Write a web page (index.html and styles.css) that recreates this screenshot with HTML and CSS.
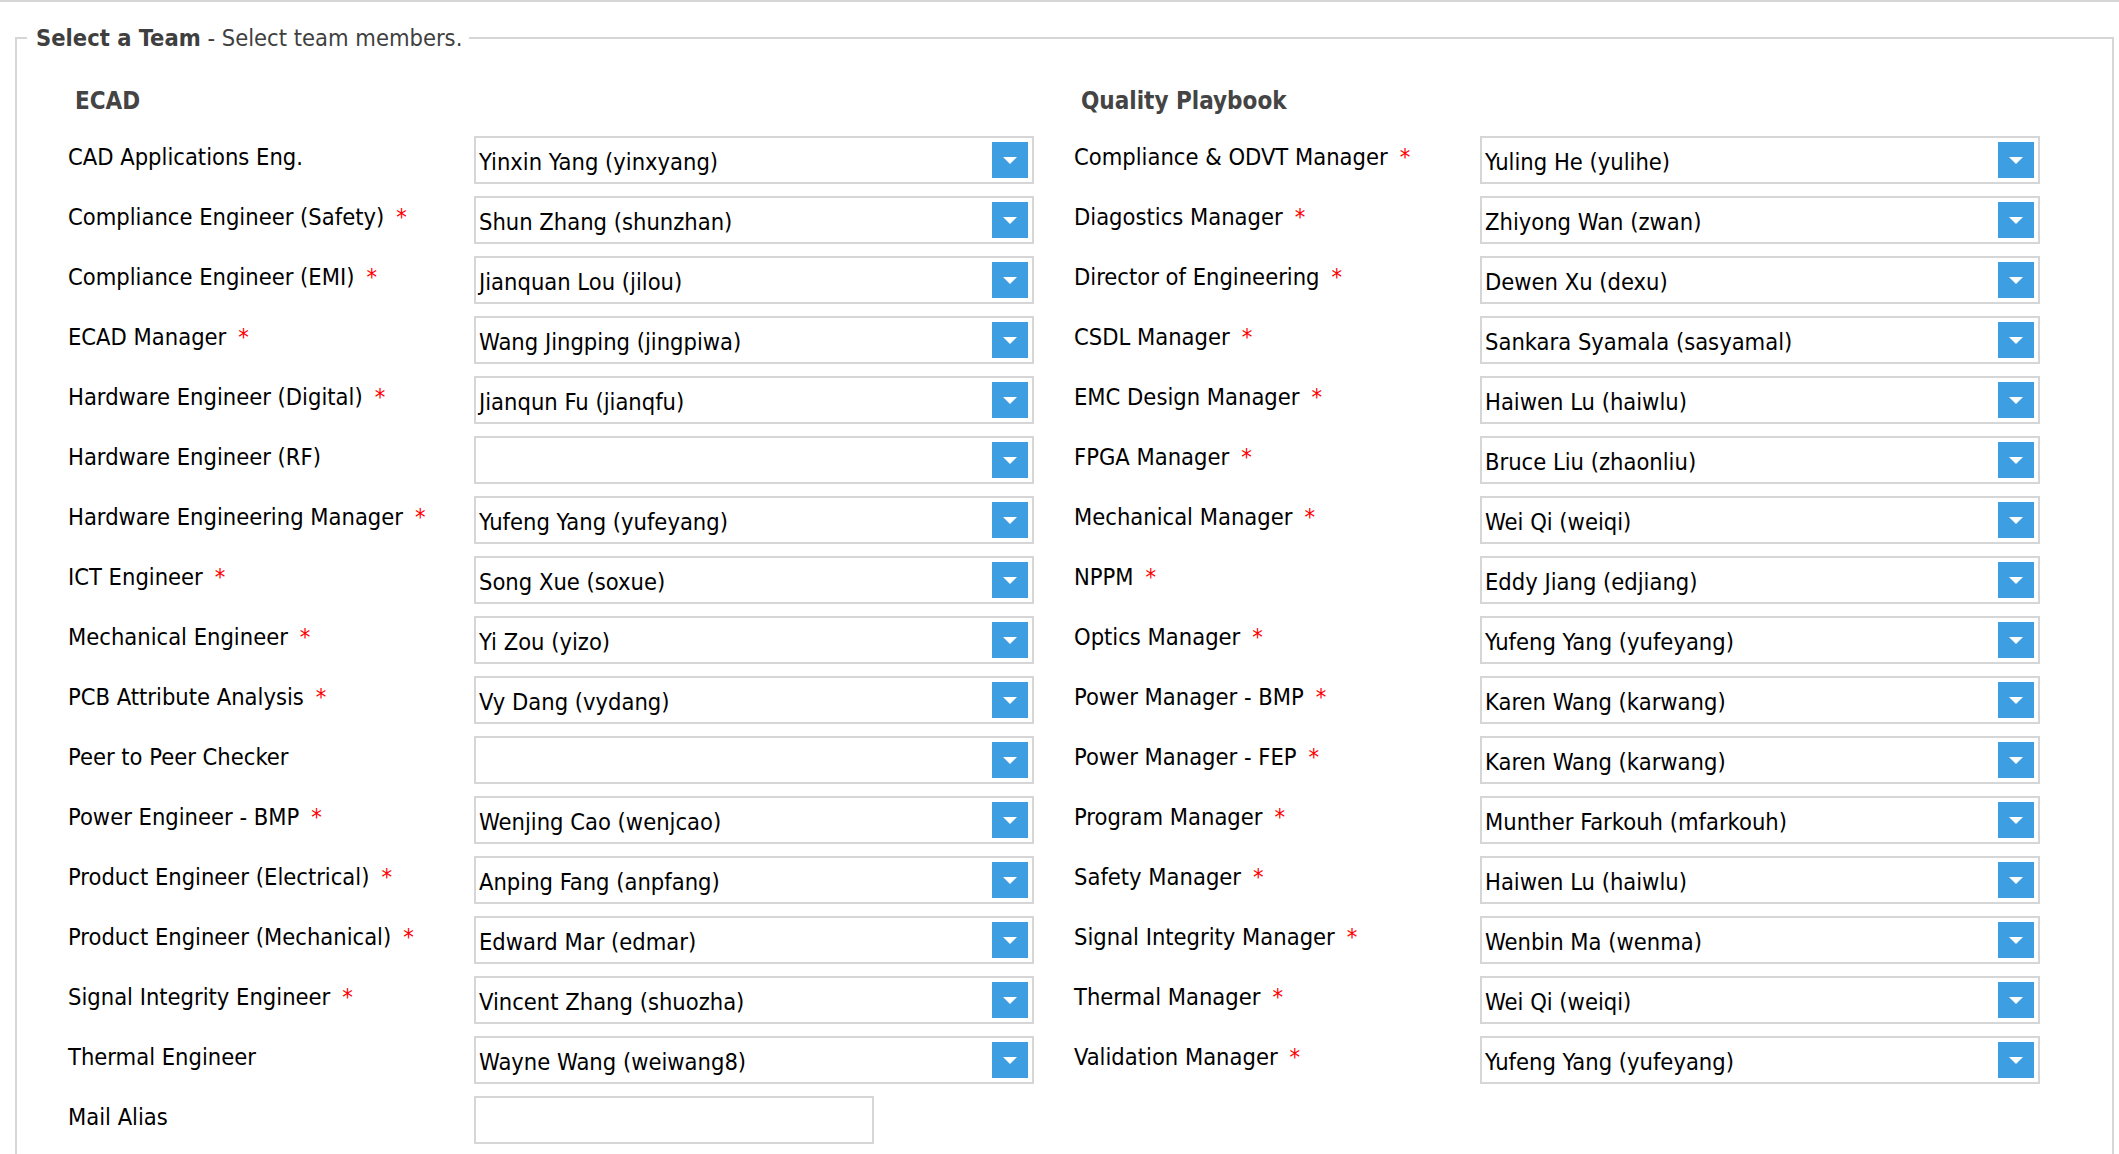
FILE: index.html
```html
<!DOCTYPE html>
<html>
<head>
<meta charset="utf-8">
<title>Select a Team</title>
<link rel="stylesheet" href="styles.css">
</head>
<body>
<div class="topline"></div>
<fieldset class="team">
  <legend class="team-legend"><strong>Select a Team</strong> - Select team members.</legend>
  <div class="sections">
    <section class="group">
      <h3 class="group-title">ECAD</h3>
      <div class="rows">
        <div class="row"><label class="lbl">CAD Applications Eng.</label><div class="combo"><span class="val">Yinxin Yang (yinxyang)</span><span class="btn"><svg width="14" height="7" viewBox="0 0 14 7"><polygon points="0,0 14,0 7,7" fill="#fff"/></svg></span></div></div>
        <div class="row"><label class="lbl">Compliance Engineer (Safety)<span class="req">*</span></label><div class="combo"><span class="val">Shun Zhang (shunzhan)</span><span class="btn"><svg width="14" height="7" viewBox="0 0 14 7"><polygon points="0,0 14,0 7,7" fill="#fff"/></svg></span></div></div>
        <div class="row"><label class="lbl">Compliance Engineer (EMI)<span class="req">*</span></label><div class="combo"><span class="val">Jianquan Lou (jilou)</span><span class="btn"><svg width="14" height="7" viewBox="0 0 14 7"><polygon points="0,0 14,0 7,7" fill="#fff"/></svg></span></div></div>
        <div class="row"><label class="lbl">ECAD Manager<span class="req">*</span></label><div class="combo"><span class="val">Wang Jingping (jingpiwa)</span><span class="btn"><svg width="14" height="7" viewBox="0 0 14 7"><polygon points="0,0 14,0 7,7" fill="#fff"/></svg></span></div></div>
        <div class="row"><label class="lbl">Hardware Engineer (Digital)<span class="req">*</span></label><div class="combo"><span class="val">Jianqun Fu (jianqfu)</span><span class="btn"><svg width="14" height="7" viewBox="0 0 14 7"><polygon points="0,0 14,0 7,7" fill="#fff"/></svg></span></div></div>
        <div class="row"><label class="lbl">Hardware Engineer (RF)</label><div class="combo"><span class="val"></span><span class="btn"><svg width="14" height="7" viewBox="0 0 14 7"><polygon points="0,0 14,0 7,7" fill="#fff"/></svg></span></div></div>
        <div class="row"><label class="lbl">Hardware Engineering Manager<span class="req">*</span></label><div class="combo"><span class="val">Yufeng Yang (yufeyang)</span><span class="btn"><svg width="14" height="7" viewBox="0 0 14 7"><polygon points="0,0 14,0 7,7" fill="#fff"/></svg></span></div></div>
        <div class="row"><label class="lbl">ICT Engineer<span class="req">*</span></label><div class="combo"><span class="val">Song Xue (soxue)</span><span class="btn"><svg width="14" height="7" viewBox="0 0 14 7"><polygon points="0,0 14,0 7,7" fill="#fff"/></svg></span></div></div>
        <div class="row"><label class="lbl">Mechanical Engineer<span class="req">*</span></label><div class="combo"><span class="val">Yi Zou (yizo)</span><span class="btn"><svg width="14" height="7" viewBox="0 0 14 7"><polygon points="0,0 14,0 7,7" fill="#fff"/></svg></span></div></div>
        <div class="row"><label class="lbl">PCB Attribute Analysis<span class="req">*</span></label><div class="combo"><span class="val">Vy Dang (vydang)</span><span class="btn"><svg width="14" height="7" viewBox="0 0 14 7"><polygon points="0,0 14,0 7,7" fill="#fff"/></svg></span></div></div>
        <div class="row"><label class="lbl">Peer to Peer Checker</label><div class="combo"><span class="val"></span><span class="btn"><svg width="14" height="7" viewBox="0 0 14 7"><polygon points="0,0 14,0 7,7" fill="#fff"/></svg></span></div></div>
        <div class="row"><label class="lbl">Power Engineer - BMP<span class="req">*</span></label><div class="combo"><span class="val">Wenjing Cao (wenjcao)</span><span class="btn"><svg width="14" height="7" viewBox="0 0 14 7"><polygon points="0,0 14,0 7,7" fill="#fff"/></svg></span></div></div>
        <div class="row"><label class="lbl">Product Engineer (Electrical)<span class="req">*</span></label><div class="combo"><span class="val">Anping Fang (anpfang)</span><span class="btn"><svg width="14" height="7" viewBox="0 0 14 7"><polygon points="0,0 14,0 7,7" fill="#fff"/></svg></span></div></div>
        <div class="row"><label class="lbl">Product Engineer (Mechanical)<span class="req">*</span></label><div class="combo"><span class="val">Edward Mar (edmar)</span><span class="btn"><svg width="14" height="7" viewBox="0 0 14 7"><polygon points="0,0 14,0 7,7" fill="#fff"/></svg></span></div></div>
        <div class="row"><label class="lbl">Signal Integrity Engineer<span class="req">*</span></label><div class="combo"><span class="val">Vincent Zhang (shuozha)</span><span class="btn"><svg width="14" height="7" viewBox="0 0 14 7"><polygon points="0,0 14,0 7,7" fill="#fff"/></svg></span></div></div>
        <div class="row"><label class="lbl">Thermal Engineer</label><div class="combo"><span class="val">Wayne Wang (weiwang8)</span><span class="btn"><svg width="14" height="7" viewBox="0 0 14 7"><polygon points="0,0 14,0 7,7" fill="#fff"/></svg></span></div></div>
        <div class="row"><label class="lbl">Mail Alias</label><div class="textbox"></div></div>
      </div>
    </section>
    <section class="group">
      <h3 class="group-title">Quality Playbook</h3>
      <div class="rows">
        <div class="row"><label class="lbl">Compliance &amp; ODVT Manager<span class="req">*</span></label><div class="combo"><span class="val">Yuling He (yulihe)</span><span class="btn"><svg width="14" height="7" viewBox="0 0 14 7"><polygon points="0,0 14,0 7,7" fill="#fff"/></svg></span></div></div>
        <div class="row"><label class="lbl">Diagostics Manager<span class="req">*</span></label><div class="combo"><span class="val">Zhiyong Wan (zwan)</span><span class="btn"><svg width="14" height="7" viewBox="0 0 14 7"><polygon points="0,0 14,0 7,7" fill="#fff"/></svg></span></div></div>
        <div class="row"><label class="lbl">Director of Engineering<span class="req">*</span></label><div class="combo"><span class="val">Dewen Xu (dexu)</span><span class="btn"><svg width="14" height="7" viewBox="0 0 14 7"><polygon points="0,0 14,0 7,7" fill="#fff"/></svg></span></div></div>
        <div class="row"><label class="lbl">CSDL Manager<span class="req">*</span></label><div class="combo"><span class="val">Sankara Syamala (sasyamal)</span><span class="btn"><svg width="14" height="7" viewBox="0 0 14 7"><polygon points="0,0 14,0 7,7" fill="#fff"/></svg></span></div></div>
        <div class="row"><label class="lbl">EMC Design Manager<span class="req">*</span></label><div class="combo"><span class="val">Haiwen Lu (haiwlu)</span><span class="btn"><svg width="14" height="7" viewBox="0 0 14 7"><polygon points="0,0 14,0 7,7" fill="#fff"/></svg></span></div></div>
        <div class="row"><label class="lbl">FPGA Manager<span class="req">*</span></label><div class="combo"><span class="val">Bruce Liu (zhaonliu)</span><span class="btn"><svg width="14" height="7" viewBox="0 0 14 7"><polygon points="0,0 14,0 7,7" fill="#fff"/></svg></span></div></div>
        <div class="row"><label class="lbl">Mechanical Manager<span class="req">*</span></label><div class="combo"><span class="val">Wei Qi (weiqi)</span><span class="btn"><svg width="14" height="7" viewBox="0 0 14 7"><polygon points="0,0 14,0 7,7" fill="#fff"/></svg></span></div></div>
        <div class="row"><label class="lbl">NPPM<span class="req">*</span></label><div class="combo"><span class="val">Eddy Jiang (edjiang)</span><span class="btn"><svg width="14" height="7" viewBox="0 0 14 7"><polygon points="0,0 14,0 7,7" fill="#fff"/></svg></span></div></div>
        <div class="row"><label class="lbl">Optics Manager<span class="req">*</span></label><div class="combo"><span class="val">Yufeng Yang (yufeyang)</span><span class="btn"><svg width="14" height="7" viewBox="0 0 14 7"><polygon points="0,0 14,0 7,7" fill="#fff"/></svg></span></div></div>
        <div class="row"><label class="lbl">Power Manager - BMP<span class="req">*</span></label><div class="combo"><span class="val">Karen Wang (karwang)</span><span class="btn"><svg width="14" height="7" viewBox="0 0 14 7"><polygon points="0,0 14,0 7,7" fill="#fff"/></svg></span></div></div>
        <div class="row"><label class="lbl">Power Manager - FEP<span class="req">*</span></label><div class="combo"><span class="val">Karen Wang (karwang)</span><span class="btn"><svg width="14" height="7" viewBox="0 0 14 7"><polygon points="0,0 14,0 7,7" fill="#fff"/></svg></span></div></div>
        <div class="row"><label class="lbl">Program Manager<span class="req">*</span></label><div class="combo"><span class="val">Munther Farkouh (mfarkouh)</span><span class="btn"><svg width="14" height="7" viewBox="0 0 14 7"><polygon points="0,0 14,0 7,7" fill="#fff"/></svg></span></div></div>
        <div class="row"><label class="lbl">Safety Manager<span class="req">*</span></label><div class="combo"><span class="val">Haiwen Lu (haiwlu)</span><span class="btn"><svg width="14" height="7" viewBox="0 0 14 7"><polygon points="0,0 14,0 7,7" fill="#fff"/></svg></span></div></div>
        <div class="row"><label class="lbl">Signal Integrity Manager<span class="req">*</span></label><div class="combo"><span class="val">Wenbin Ma (wenma)</span><span class="btn"><svg width="14" height="7" viewBox="0 0 14 7"><polygon points="0,0 14,0 7,7" fill="#fff"/></svg></span></div></div>
        <div class="row"><label class="lbl">Thermal Manager<span class="req">*</span></label><div class="combo"><span class="val">Wei Qi (weiqi)</span><span class="btn"><svg width="14" height="7" viewBox="0 0 14 7"><polygon points="0,0 14,0 7,7" fill="#fff"/></svg></span></div></div>
        <div class="row"><label class="lbl">Validation Manager<span class="req">*</span></label><div class="combo"><span class="val">Yufeng Yang (yufeyang)</span><span class="btn"><svg width="14" height="7" viewBox="0 0 14 7"><polygon points="0,0 14,0 7,7" fill="#fff"/></svg></span></div></div>
      </div>
    </section>
  </div>
</fieldset>
</body>
</html>
```

FILE: styles.css
```css
html, body {
  margin: 0;
  padding: 0;
  background: #fff;
}
body {
  font-family: "DejaVu Sans Condensed", "DejaVu Sans", sans-serif;
  font-stretch: condensed;
  color: #000;
  overflow: hidden;
}
.topline {
  height: 2px;
  background: #d6d6d6;
}
.team {
  margin: 22px 5px 0 15px;
  padding: 0 0 40px 51px;
  border: 2px solid #d6d6d6;
  min-width: 0;
}
.team-legend {
  font-size: 23.5px;
  line-height: 28px;
  color: #3f3f3f;
  padding: 0 7px 0 9px;
  margin-left: -41px;
}
.team-legend strong {
  font-weight: bold;
}
.sections {
  display: flex;
  gap: 40px;
  padding-top: 35px;
}
.group {
  width: 966px;
}
.group-title {
  margin: 0 0 21px 7px;
  font-size: 24px;
  line-height: 28px;
  font-weight: bold;
  color: #444;
}
.rows {
  display: flex;
  flex-direction: column;
  gap: 12px;
}
.row {
  display: grid;
  grid-template-columns: 406px 560px;
  height: 48px;
}
.lbl {
  font-size: 23.5px;
  line-height: 28px;
  padding-top: 7px;
  white-space: nowrap;
}
.req {
  color: #f00;
  margin-left: 12px;
}
.combo {
  box-sizing: border-box;
  height: 48px;
  border: 2px solid #d6d6d6;
  display: flex;
  align-items: flex-start;
  padding: 0 4px 0 3px;
}
.val {
  flex: 1;
  font-size: 23.5px;
  line-height: 28px;
  padding-top: 10px;
  white-space: nowrap;
}
.btn {
  margin-top: 4px;
  width: 36px;
  height: 36px;
  background: #3d9fe1;
  display: flex;
  align-items: center;
  justify-content: center;
}
.btn svg {
  display: block;
  margin-top: 1px;
}
.textbox {
  box-sizing: border-box;
  width: 400px;
  height: 48px;
  border: 2px solid #d6d6d6;
}
```
